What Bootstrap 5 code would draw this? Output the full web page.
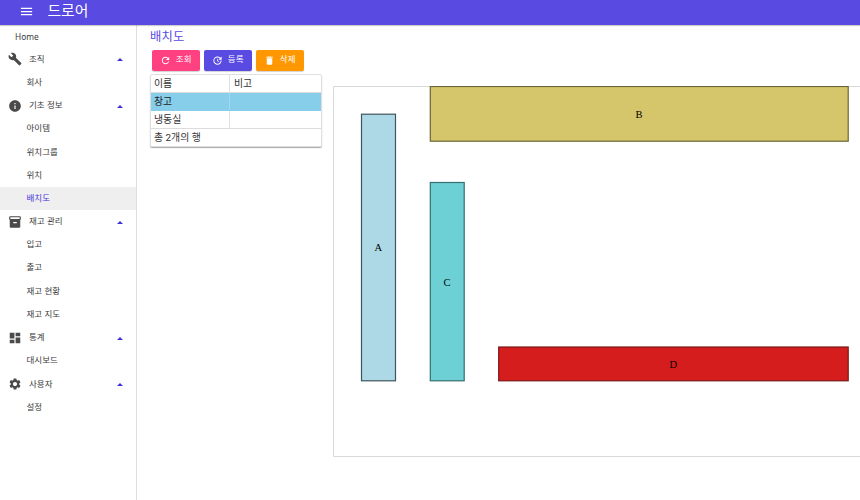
<!DOCTYPE html>
<html lang="ko">
<head>
<meta charset="utf-8">
<meta name="viewport" content="width=device-width, initial-scale=1">
<title>드로어</title>
<link href="https://cdn.jsdelivr.net/npm/bootstrap@5.3.0/dist/css/bootstrap.min.css" rel="stylesheet">
<style>
body{font-family:Roboto,"Noto Sans CJK KR",sans-serif;color:#333;background:#fff;height:500px}
svg{fill:currentColor;flex:none}
.topbar{height:24.6px;background:#594ae2;box-shadow:0 1px 1px rgba(0,0,0,.2);padding:0 0 2px 19px}
.topbar svg{width:15px;height:15px}
.brand{font-size:14.8px;line-height:20px;margin-left:13.500px}
.sidebar{width:137px;height:475.400px;border-right:1px solid #dedede;flex:none}
.sidebar .nav-link{height:23.200px;font-size:8.500px;line-height:23px;color:#3a3a3a;letter-spacing:.05px;padding:0 13px 0 26.500px}
.sidebar .home{padding:0 0 0 15px;line-height:23px;font-size:8.300px;letter-spacing:0;font-family:"Noto Sans",sans-serif}
.sidebar .group{padding-left:8px}
.sidebar .group>svg:first-child{width:14px;height:14px;color:#4a4a4a;margin-right:7px}
.sidebar .group>svg:last-child{width:6px;height:3px;color:#3f2fdc;margin-top:1px}
.sidebar .nav-link.active{background:#efefef;color:#4a38dc}
.workspace{padding:0 0 0 13px}
.page-title{font-size:12.300px;line-height:16px;color:#594ae2;margin:4.400px 0 0;letter-spacing:.2px}
.actions{margin:5px 0 0 1.500px;gap:3.500px}
.actions .btn{width:48.500px;height:21px;font-size:8.500px;line-height:19px;padding:0 0 1px;border:0;border-radius:2px;gap:5px;color:#fff;letter-spacing:.1px;box-shadow:0 1px 1px rgba(0,0,0,.18)}
.actions svg{width:11px;height:11px;margin-top:1px}
.btn-find{background:#ff4081!important}.btn-add{background:#594ae2!important}.btn-del{background:#ff9800!important}
.grid-box{width:172px;height:73px;margin-top:3px;border:1px solid #e0e0e0;border-radius:2px;box-shadow:0 1px 1px rgba(0,0,0,.35);font-size:9.9px;color:#333}
.grid-box .line{height:18px;line-height:17px;border-bottom:1px solid #dcdcdc}
.grid-box .line:last-child{border:0;line-height:17px;padding-left:3px;letter-spacing:0}
.grid-box .cell{padding-left:3px}
.grid-box .cell:first-child{width:79px;border-right:1px solid #e0e0e0}
.grid-box .cell:last-child{padding-left:4px}
.grid-box .picked{background:#87ceeb;border-color:#87ceeb;color:#222}
.grid-box .picked .cell{border-color:#a5d8ec!important}
.plan{margin:61px 0 0 11px;width:527px;height:372px;overflow:hidden}
.plan text{font:10.500px "Liberation Serif",serif;fill:#000;text-anchor:middle}
</style>
<script src="https://cdn.jsdelivr.net/npm/bootstrap@5.3.0/dist/js/bootstrap.bundle.min.js"></script>
</head>
<body class="overflow-hidden">
<header class="topbar d-flex align-items-center text-white position-relative">
  <svg viewBox="0 0 24 24"><path d="M3 18h18v-2H3zm0-5h18v-2H3zm0-7v2h18V6z"/></svg>
  <span class="brand">드로어</span>
</header>
<div class="d-flex">
  <nav class="sidebar nav flex-column flex-nowrap">
    <a class="nav-link home">Home</a>
    <a class="nav-link group d-flex align-items-center"><svg viewBox="0 0 24 24"><path d="M22.7 19l-9.1-9.1c.9-2.3.4-5-1.5-6.9-2-2-5-2.4-7.4-1.3L9 6 6 9 1.6 4.7C.4 7.1.9 10.1 2.9 12.1c1.9 1.9 4.6 2.4 6.9 1.5l9.1 9.1c.4.4 1 .4 1.4 0l2.3-2.3c.5-.4.5-1.1.1-1.4z"/></svg><span class="flex-grow-1">조직</span><svg viewBox="0 0 6 3"><path d="M0 3l3-3 3 3z"/></svg></a>
    <a class="nav-link">회사</a>
    <a class="nav-link group d-flex align-items-center"><svg viewBox="0 0 24 24"><path d="M12 2C6.480 2 2 6.480 2 12s4.480 10 10 10 10-4.480 10-10S17.520 2 12 2zm1 15h-2v-6h2v6zm0-8h-2V7h2v2z"/></svg><span class="flex-grow-1">기초 정보</span><svg viewBox="0 0 6 3"><path d="M0 3l3-3 3 3z"/></svg></a>
    <a class="nav-link">아이템</a>
    <a class="nav-link">위치그룹</a>
    <a class="nav-link">위치</a>
    <a class="nav-link active">배치도</a>
    <a class="nav-link group d-flex align-items-center"><svg viewBox="0 0 24 24"><path d="M20 2H4c-1 0-2 .9-2 2v3.010c0 .72.43 1.340 1 1.690V20c0 1.100 1.100 2 2 2h14c.9 0 2-.9 2-2V8.700c.57-.35 1-.97 1-1.690V4c0-1.100-1-2-2-2zm-5 12H9v-2h6v2zm5-7H4V4h16v3z"/></svg><span class="flex-grow-1">재고 관리</span><svg viewBox="0 0 6 3"><path d="M0 3l3-3 3 3z"/></svg></a>
    <a class="nav-link">입고</a>
    <a class="nav-link">출고</a>
    <a class="nav-link">재고 현황</a>
    <a class="nav-link">재고 지도</a>
    <a class="nav-link group d-flex align-items-center"><svg viewBox="0 0 24 24"><path d="M3 13h8V3H3v10zm0 8h8v-6H3v6zm10 0h8V11h-8v10zm0-18v6h8V3h-8z"/></svg><span class="flex-grow-1">통계</span><svg viewBox="0 0 6 3"><path d="M0 3l3-3 3 3z"/></svg></a>
    <a class="nav-link">대시보드</a>
    <a class="nav-link group d-flex align-items-center"><svg viewBox="0 0 24 24"><path d="M19.140 12.940c.04-.3.06-.61.06-.94 0-.32-.02-.64-.07-.94l2.030-1.580c.18-.14.23-.41.12-.61l-1.920-3.320c-.12-.22-.37-.29-.59-.22l-2.390.96c-.5-.38-1.030-.7-1.620-.94l-.36-2.540c-.04-.24-.24-.41-.48-.41h-3.840c-.24 0-.43.17-.47.41l-.36 2.540c-.59.24-1.130.57-1.620.94l-2.390-.96c-.22-.08-.47 0-.59.22L2.740 8.870c-.12.21-.08.47.12.61l2.030 1.580c-.05.3-.09.63-.09.94s.02.64.07.94l-2.030 1.580c-.18.14-.23.41-.12.61l1.920 3.320c.12.22.37.29.59.22l2.390-.96c.5.38 1.030.7 1.620.94l.36 2.540c.05.24.24.41.48.41h3.840c.24 0 .44-.17.47-.41l.36-2.540c.59-.24 1.130-.56 1.620-.94l2.390.96c.22.08.47 0 .59-.22l1.920-3.320c.12-.22.07-.47-.12-.61l-2.010-1.580zM12 15.600c-1.980 0-3.600-1.620-3.600-3.600s1.620-3.600 3.600-3.600 3.600 1.620 3.600 3.600-1.620 3.600-3.600 3.600z"/></svg><span class="flex-grow-1">사용자</span><svg viewBox="0 0 6 3"><path d="M0 3l3-3 3 3z"/></svg></a>
    <a class="nav-link">설정</a>
  </nav>
  <main class="workspace d-flex flex-grow-1">
    <section>
      <h1 class="page-title fw-normal">배치도</h1>
      <div class="actions d-flex">
        <button class="btn btn-find d-flex align-items-center justify-content-center"><svg viewBox="0 0 24 24"><path d="M17.650 6.350C16.200 4.900 14.210 4 12 4c-4.420 0-7.990 3.580-7.990 8s3.570 8 7.990 8c3.730 0 6.840-2.550 7.730-6h-2.080c-.82 2.330-3.040 4-5.650 4-3.310 0-6-2.690-6-6s2.690-6 6-6c1.660 0 3.140.69 4.220 1.780L13 11h7V4l-2.350 2.350z"/></svg>조회</button>
        <button class="btn btn-add d-flex align-items-center justify-content-center"><svg viewBox="0 0 24 24"><path d="M21 10.120h-6.780l2.740-2.820c-2.730-2.700-7.150-2.800-9.880-.1-2.730 2.710-2.730 7.080 0 9.790s7.150 2.710 9.880 0C18.320 15.650 19 14.080 19 12.100h2c0 1.980-.88 4.550-2.640 6.290-3.510 3.480-9.210 3.480-12.720 0-3.500-3.470-3.530-9.110-.02-12.580s9.140-3.470 12.650 0L21 3v7.120zM12.500 8v4.250l3.500 2.080-.72 1.210L11 13V8h1.500z"/></svg>등록</button>
        <button class="btn btn-del d-flex align-items-center justify-content-center"><svg viewBox="0 0 24 24"><path d="M6 19c0 1.100.9 2 2 2h8c1.100 0 2-.9 2-2V7H6v12zM19 4h-3.500l-1-1h-5l-1 1H5v2h14V4z"/></svg>삭제</button>
      </div>
      <div class="grid-box">
        <div class="line d-flex"><div class="cell">이름</div><div class="cell">비고</div></div>
        <div class="line d-flex picked"><div class="cell">창고</div><div class="cell"></div></div>
        <div class="line d-flex"><div class="cell">냉동실</div><div class="cell"></div></div>
        <div class="line">총 2개의 행</div>
      </div>
    </section>
    <svg class="plan" viewBox="333 86 527 372">
      <path d="M861 86.500H333.500V456.500H861" fill="none" stroke="#d9d9d9"/>
      <g stroke-width="1.200">
        <rect x="361.500" y="114.200" width="34" height="266.600" fill="#add8e6" stroke="#3f555d"/>
        <rect x="430.300" y="86.500" width="417.900" height="54.700" fill="#d5c66b" stroke="#6b6436"/>
        <rect x="430.300" y="182.500" width="33.900" height="198.300" fill="#6dd0d5" stroke="#356f72"/>
        <rect x="498.700" y="347" width="349.500" height="33.800" fill="#d51d1d" stroke="#7a1818"/>
      </g>
      <text x="378.400" y="251">A</text><text x="639" y="117.500">B</text><text x="447" y="285.500">C</text><text x="673.200" y="367.700">D</text>
    </svg>
  </main>
</div>
</body>
</html>
